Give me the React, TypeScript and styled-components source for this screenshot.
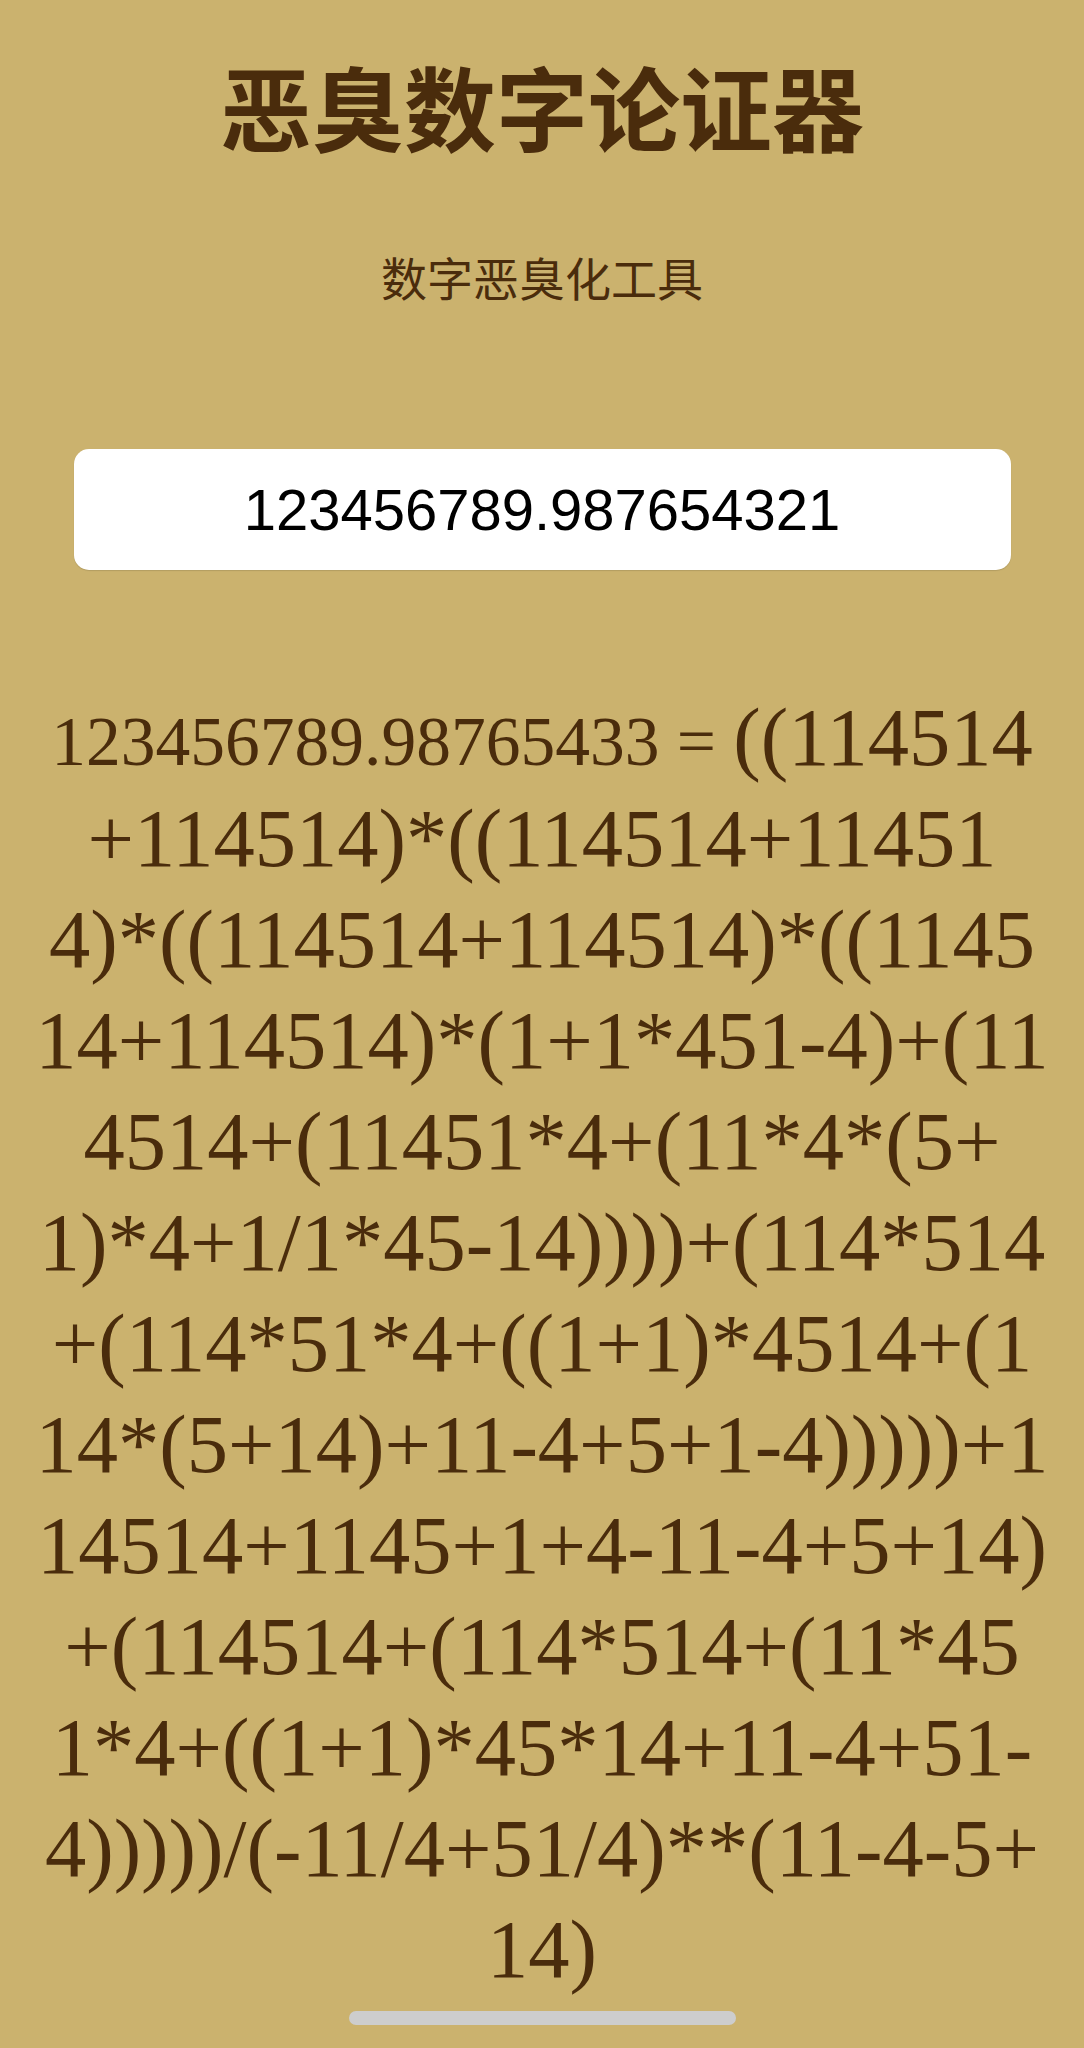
import { createGlobalStyle } from 'styled-components';
import styled from 'styled-components';

const GlobalStyle = createGlobalStyle`
    html, body {
        margin: 0;
        padding: 0;
        background: #cbb26e;
    }
`;

const Page = styled.main`
    min-height: 2048px;
    display: flex;
    flex-direction: column;
    align-items: center;
    background: #cbb26e;
    color: #4a2c0c;
`;

const Title = styled.h1`
    margin: 50px 0 0;
    font-family: 'Noto Sans CJK SC', sans-serif;
    font-weight: 700;
    font-size: 92px;
    line-height: 110px;
`;

const Subtitle = styled.p`
    margin: 88px 0 0;
    font-family: 'Noto Sans CJK SC', sans-serif;
    font-weight: 400;
    font-size: 46px;
    line-height: 56px;
`;

const NumberInput = styled.input`
    box-sizing: border-box;
    margin-top: 145px;
    width: 937px;
    height: 121px;
    border: none;
    border-radius: 15px;
    background: #ffffff;
    box-shadow: 0 1px 1px rgba(0, 0, 0, 0.12);
    text-align: center;
    font-family: 'Liberation Sans', Arial, sans-serif;
    font-size: 58px;
    color: #000;
    outline: none;
`;

const Result = styled.p`
    margin: 117px 0 0;
    width: 1060px;
    text-align: center;
    font-family: 'Liberation Serif', 'Noto Sans CJK SC', serif;
    font-size: 82.5px;
    line-height: 101px;
    white-space: nowrap;
`;

const Line = styled.span`
    display: block;
`;

const Source = styled.span`
    font-size: 69.5px;
    line-height: 1;
`;

const HomeIndicator = styled.div`
    position: fixed;
    left: 349px;
    bottom: 23px;
    width: 387px;
    height: 14px;
    border-radius: 7px;
    background: #cdcdcd;
`;

const input = '123456789.987654321';
const source = '123456789.98765433';
const lines = [
    '((114514',
    '+114514)*((114514+11451',
    '4)*((114514+114514)*((1145',
    '14+114514)*(1+1*451-4)+(11',
    '4514+(11451*4+(11*4*(5+',
    '1)*4+1/1*45-14))))+(114*514',
    '+(114*51*4+((1+1)*4514+(1',
    '14*(5+14)+11-4+5+1-4)))))+1',
    '14514+1145+1+4-11-4+5+14)',
    '+(114514+(114*514+(11*45',
    '1*4+((1+1)*45*14+11-4+51-',
    '4)))))/(-11/4+51/4)**(11-4-5+',
    '14)',
];

export default function App() {
    return (
        <>
            <GlobalStyle />
            <Page>
                <Title>恶臭数字论证器</Title>
                <Subtitle>数字恶臭化工具</Subtitle>
                <NumberInput type="text" defaultValue={input} />
                <Result>
                    {lines.map((line, i) => (
                        <Line key={i}>
                            {i === 0 && <Source>{source} = </Source>}
                            {line}
                        </Line>
                    ))}
                </Result>
            </Page>
            <HomeIndicator />
        </>
    );
}
